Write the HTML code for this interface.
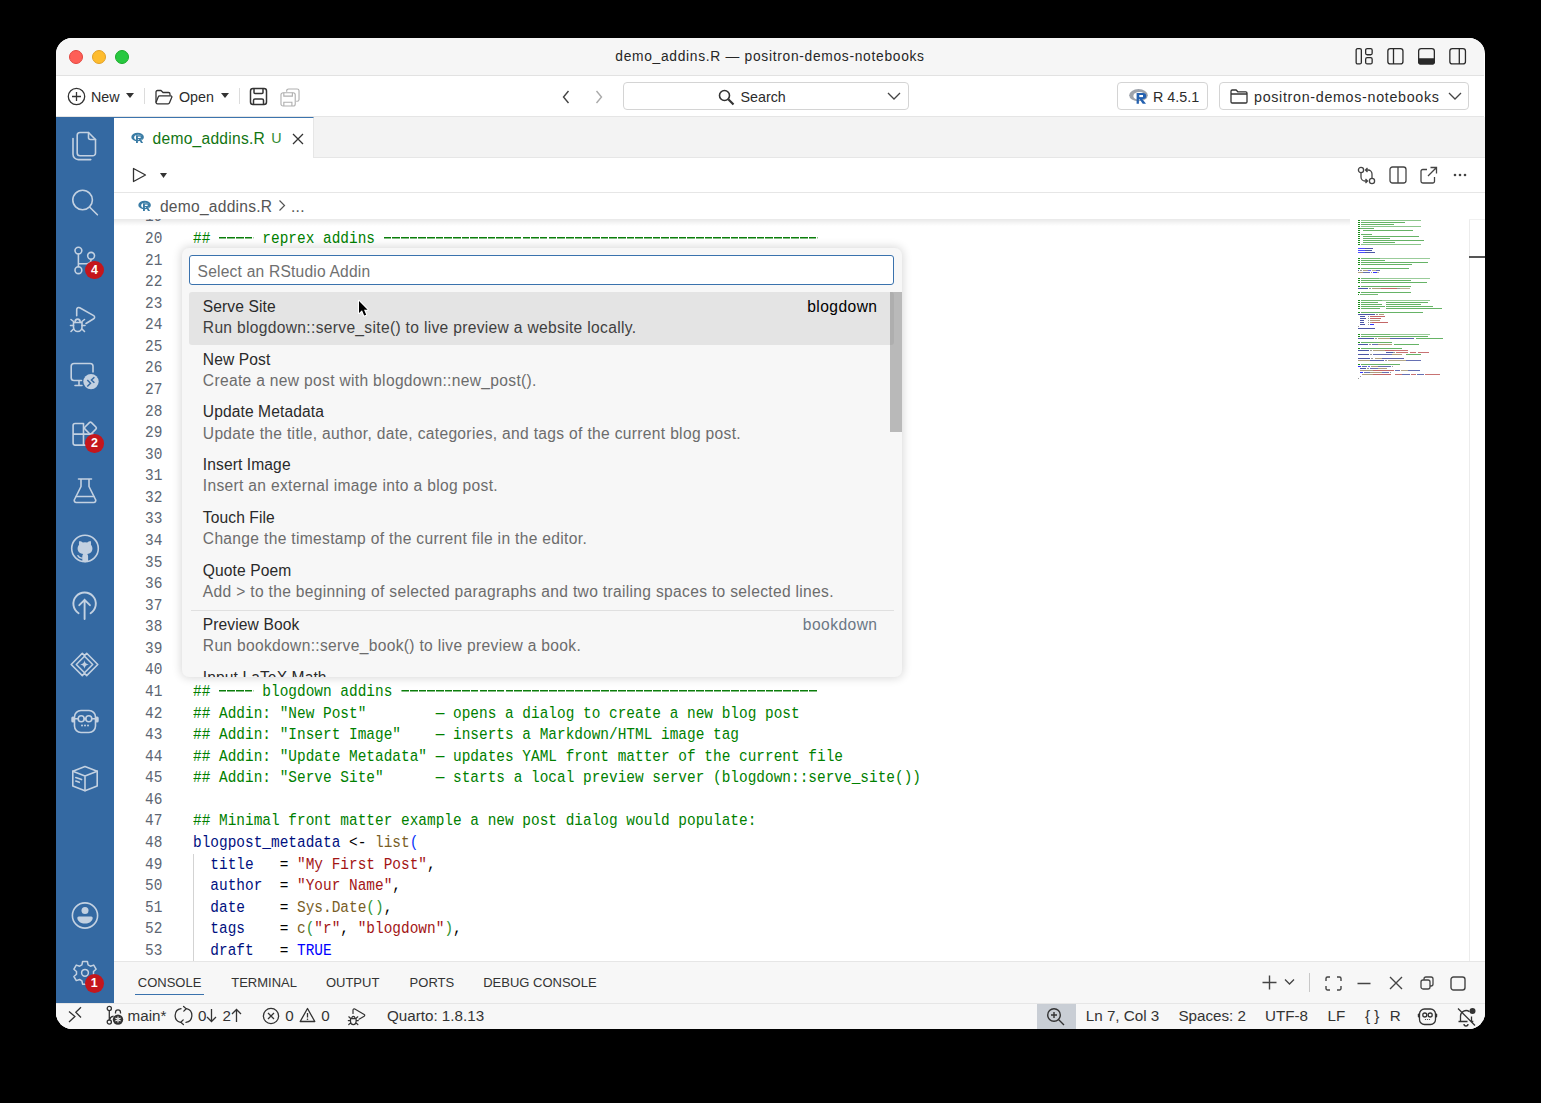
<!DOCTYPE html>
<html><head><meta charset="utf-8">
<style>
*{box-sizing:border-box;margin:0;padding:0}
html,body{width:1541px;height:1103px;background:#000;overflow:hidden}
body{font-family:"Liberation Sans",sans-serif;position:relative}
.abs{position:absolute}
#win{position:absolute;left:56px;top:38px;width:1429px;height:991px;border-radius:16px;overflow:hidden;background:#fff}
#title{left:0;top:0;width:1428px;height:38px;background:#f6f6f6;border-bottom:1px solid #e2e2e2}
.tl{position:absolute;top:12px;width:14px;height:14px;border-radius:50%}
#toolbar{left:0;top:38px;width:1428px;height:41px;background:#fff;border-bottom:1px solid #e5e5e5}
#act{left:0;top:79px;width:58px;height:886px;background:#33679f}
#tabs{left:58px;top:79px;width:1370px;height:41px;background:#f3f3f3;border-bottom:1px solid #e8e8e8}
#tab{left:0;top:0;width:200px;height:41px;background:#fff;border-top:1px solid #3a73ad;border-right:1px solid #e8e8e8}
#actions{left:58px;top:120px;width:1370px;height:35px;background:#fff;border-bottom:1px solid #e5e5e5}
#crumbs{left:58px;top:155px;width:1370px;height:26px;background:#fff}
#editor{left:58px;top:181px;width:1370px;height:742px;background:#fff}
#panel{left:58px;top:923px;width:1370px;height:42px;background:#f7f7f7;border-top:1px solid #e5e5e5}
#status{left:0;top:965px;width:1428px;height:26px;background:#f7f7f7;border-top:1px solid #e5e5e5}
.code{font-family:"Liberation Mono",monospace;font-size:14.4px;white-space:pre;color:#000}
.ln{position:absolute;left:0;width:104px;text-align:right;color:#6e7781;font-family:"Liberation Mono",monospace;font-size:14.4px}
.cl{position:absolute;left:137px}
.cm{color:#008000}
.id{color:#001080}
.fn{color:#795e26}
.st{color:#a31515}
.kw{color:#0000ff}
.b1{color:#0431fa}
.b2{color:#319331}
#qp{left:126px;top:210px;width:720px;height:429px;background:#f7f7f7;border-radius:8px;box-shadow:0 0 8px rgba(0,0,0,.18);overflow:hidden}
.ui{font-size:14px;color:#1f1f1f}
.tb{font-size:14.3px;color:#2b2b2b;white-space:nowrap}
.t13{white-space:nowrap}

.ln{color:#5d6672;font-family:"Liberation Mono",monospace;font-size:16.3px;text-align:right;white-space:pre}
.code{font-family:"Liberation Mono",monospace;font-size:16.3px;white-space:pre;color:#000}
.cm{color:#008000}.id{color:#001080}.fn{color:#795e26}.st{color:#a31515}.kw{color:#0000ff}.b1{color:#0431fa}.b2{color:#319331}.op{color:#000}
.dsh{color:transparent;display:inline-block;vertical-align:top;height:21.57px;background:repeating-linear-gradient(90deg,#0b7d0b 0 0.7px,#0b7d0b 0.7px 8.6px,transparent 8.6px 9.78px) 0 9.3px/100% 1.5px no-repeat}
.tabt{font-size:15.6px;letter-spacing:0.25px;white-space:nowrap}
.bct{font-size:15.6px;letter-spacing:0.25px;white-space:nowrap;color:#555}
.badge{background:#c4161c;color:#fff;border-radius:50%;text-align:center;font-weight:bold;font-size:12.5px}
.pt{font-size:13px;letter-spacing:0px;color:#333;white-space:nowrap}
.sb{font-size:15.2px;color:#333;white-space:nowrap}
.qpt{font-size:15.6px;letter-spacing:0.2px;white-space:nowrap}
.qpl{font-size:15.6px;letter-spacing:0.1px;white-space:nowrap;color:#2a2a2a}
.qpd{font-size:15.6px;letter-spacing:0.32px;white-space:nowrap;color:#6c6c6c}
</style></head><body>
<div id="win">
  <div id="title" class="abs">
    <div class="tl" style="left:13px;background:#fe5f57;border:0.5px solid #e2463f"></div>
    <div class="tl" style="left:36px;background:#febc2e;border:0.5px solid #e0a028"></div>
    <div class="tl" style="left:59px;background:#28c840;border:0.5px solid #1aab29"></div>
    <div class="abs t13" style="left:514px;top:10.5px;width:400px;text-align:center;font-size:13.8px;letter-spacing:0.7px;color:#262626">demo_addins.R — positron-demos-notebooks</div>
    <svg class="abs" style="left:1298px;top:9px" width="130" height="20" viewBox="0 0 130 20" fill="none" stroke="#2a2a2a" stroke-width="1.3">
      <rect x="2.15" y="1.55" width="5.2" height="15.4" rx="1.5"/><rect x="11.65" y="1.55" width="6.5" height="6.2" rx="1.5"/><rect x="11.65" y="10.7" width="6.5" height="6.25" rx="1.5"/>
      <rect x="33.85" y="1.55" width="15.1" height="15.4" rx="2.5"/><line x1="39.5" y1="1.55" x2="39.5" y2="16.95"/>
      <rect x="64.65" y="1.55" width="15.7" height="15.4" rx="2.5"/><path d="M64.65 11.9h15.7v2.55a2.5 2.5 0 0 1-2.5 2.5h-10.7a2.5 2.5 0 0 1-2.5-2.5z" fill="#2a2a2a"/>
      <rect x="95.85" y="1.55" width="15.6" height="15.4" rx="2.5"/><line x1="105.3" y1="1.55" x2="105.3" y2="16.95"/>
    </svg>
  </div>
  <div id="toolbar" class="abs">
        <svg class="abs" style="left:11px;top:11px" width="19" height="19" viewBox="0 0 19 19" fill="none" stroke="#333" stroke-width="1.3"><circle cx="9.5" cy="9.5" r="8.2"/><path d="M9.5 5v9M5 9.5h9"/></svg>
    <div class="abs tb" style="left:35px;top:12.7px">New</div>
    <svg class="abs" style="left:70px;top:17px" width="8" height="5"><path d="M0 0h8L4 5z" fill="#333"/></svg>
    <div class="abs" style="left:88px;top:12px;width:1px;height:16px;background:#dcdcdc"></div>
    <svg class="abs" style="left:99px;top:12.5px" width="18" height="16" viewBox="0 0 18 16" fill="none" stroke="#333" stroke-width="1.3" stroke-linejoin="round"><path d="M1 13.5V3a1.5 1.5 0 0 1 1.5-1.5h3.5l2 2h5.5A1.5 1.5 0 0 1 15 5v1.5"/><path d="M1 13.5 3.3 7.8A1.5 1.5 0 0 1 4.7 6.8h11.2a1 1 0 0 1 .9 1.4l-2.3 5.6a1.5 1.5 0 0 1-1.4 1H2.5A1.5 1.5 0 0 1 1 13.5z"/></svg>
    <div class="abs tb" style="left:123px;top:12.7px">Open</div>
    <svg class="abs" style="left:164.5px;top:17px" width="8" height="5"><path d="M0 0h8L4 5z" fill="#333"/></svg>
    <div class="abs" style="left:183px;top:12px;width:1px;height:16px;background:#dcdcdc"></div>
    <svg class="abs" style="left:192.5px;top:11px" width="19" height="19" viewBox="0 0 19 19" fill="none" stroke="#333" stroke-width="1.5"><rect x="1.5" y="1.5" width="16" height="16" rx="2.5"/><path d="M5 1.5v4a1 1 0 0 0 1 1h7a1 1 0 0 0 1-1v-4M4.5 17.5v-4a1.5 1.5 0 0 1 1.5-1.5h7a1.5 1.5 0 0 1 1.5 1.5v4"/></svg>
    <svg class="abs" style="left:223.5px;top:11.5px" width="20" height="19" viewBox="0 0 21 20" fill="none" stroke="#b0b0b0" stroke-width="1.2"><path d="M7 4V3a2 2 0 0 1 2-2h9a2 2 0 0 1 2 2v9a2 2 0 0 1-2 2h-1"/><rect x="1" y="5" width="15" height="14" rx="2.2"/><path d="M4 5v3.5h9V5M4 19v-4h8.5v4"/></svg>
    <svg class="abs" style="left:505px;top:13px" width="10" height="16" viewBox="0 0 10 16" fill="none" stroke="#444" stroke-width="1.4"><path d="M7.5 2 2.5 8l5 6"/></svg>
    <svg class="abs" style="left:538px;top:13px" width="10" height="16" viewBox="0 0 10 16" fill="none" stroke="#aaa" stroke-width="1.4"><path d="M2.5 2l5 6-5 6"/></svg>
    <div class="abs" style="left:567.3px;top:6.3px;width:285.5px;height:28px;border:1px solid #d4d4d4;border-radius:4px;background:#fff"></div>
    <svg class="abs" style="left:662px;top:13px" width="17" height="17" viewBox="0 0 17 17" fill="none" stroke="#333" stroke-width="1.6"><circle cx="6.5" cy="6.5" r="5"/><path d="M10.3 10.3 15.5 15.5" stroke-width="2.2"/></svg>
    <div class="abs tb" style="left:684.5px;top:12.7px">Search</div>
    <svg class="abs" style="left:831px;top:16px" width="14" height="9" viewBox="0 0 14 9" fill="none" stroke="#444" stroke-width="1.3"><path d="M1 1l6 6 6-6"/></svg>
    <div class="abs" style="left:1061.4px;top:6.3px;width:91px;height:28px;border:1px solid #d4d4d4;border-radius:4px;background:#fff"></div>
    <svg class="abs" style="left:1073px;top:12.8px" width="20" height="17" viewBox="0 0 20 17"><ellipse cx="9.5" cy="6.2" rx="9.3" ry="6.1" fill="#9ea3ab"/><ellipse cx="10.4" cy="6.9" rx="6.1" ry="3.9" fill="#fff"/><path d="M7.6 4h6.6a3 3 0 0 1 0 6h-.9l3.7 4.8h-3.3l-3.1-4.6h-.7v4.6H7.6z" fill="#2461b0"/><rect x="10.3" y="6" width="3.7" height="2.1" fill="#fff"/></svg>
    <div class="abs tb" style="left:1097px;top:12.7px">R 4.5.1</div>
    <div class="abs" style="left:1163.4px;top:6.3px;width:250px;height:28px;border:1px solid #d4d4d4;border-radius:4px;background:#fff"></div>
    <svg class="abs" style="left:1174px;top:13px" width="18" height="15" viewBox="0 0 18 15" fill="none" stroke="#333" stroke-width="1.3" stroke-linejoin="round"><path d="M1 2.2A1.2 1.2 0 0 1 2.2 1h4l1.6 1.8h8A1.2 1.2 0 0 1 17 4v8.8a1.2 1.2 0 0 1-1.2 1.2H2.2A1.2 1.2 0 0 1 1 12.8z"/><path d="M1 5h16"/></svg>
    <div class="abs tb" style="left:1198px;top:12.7px;letter-spacing:0.68px">positron-demos-notebooks</div>
    <svg class="abs" style="left:1392px;top:16px" width="14" height="9" viewBox="0 0 14 9" fill="none" stroke="#444" stroke-width="1.3"><path d="M1 1l6 6 6-6"/></svg>
  </div>
<div id="pg" class="abs" style="left:-56px;top:-38px;width:1541px;height:1103px">
<div class="abs" style="left:56px;top:117px;width:58px;height:886px;background:#3469a2"></div>
<div class="abs" style="left:114px;top:117px;width:1371px;height:41px;background:#f3f3f3;border-bottom:1px solid #e6e6e6"></div>
<div class="abs" style="left:114px;top:117px;width:200px;height:41px;background:#fff;border-top:1px solid #3c74ad;border-right:1px solid #e6e6e6"></div>
<div class="abs" style="left:114px;top:158px;width:1371px;height:35px;background:#fff;border-bottom:1px solid #e6e6e6"></div>
<div class="abs" style="left:114px;top:193px;width:1371px;height:26px;background:#fff"></div>
<div class="abs" style="left:114px;top:219px;width:1371px;height:742px;background:#fff"></div>
<div class="abs" style="left:114px;top:219px;width:1236px;height:7px;background:linear-gradient(rgba(0,0,0,.09),rgba(0,0,0,0))"></div>
<div class="abs" style="left:114px;top:961px;width:1371px;height:42px;background:#f7f7f7;border-top:1px solid #e6e6e6"></div>
<div class="abs" style="left:56px;top:1003px;width:1429px;height:26px;background:#f7f7f7;border-top:1px solid #e6e6e6"></div>
<svg class="abs" style="left:130.5px;top:132px" width="14" height="11" viewBox="0 0 14 11" ><ellipse cx="6.6" cy="5" rx="6.3" ry="4.3" fill="#3a7ca5"/><ellipse cx="7.3" cy="5.4" rx="4.1" ry="2.6" fill="#fff"/><path d="M5 3.3h5.3a1.9 1.9 0 0 1 0 3.8h-.6l2.4 3.9h-2.1l-2.1-3.7H6.9V11H5z" fill="#3a7ca5"/><rect x="6.9" y="4.6" width="2.7" height="1.4" fill="#fff"/></svg>
<div class="abs tabt" style="left:152.6px;top:130px;color:#127512">demo_addins.R</div>
<div class="abs tabt" style="left:271.3px;top:130.4px;color:#2f8a2f;font-size:14.3px">U</div>
<svg class="abs" style="left:291.5px;top:133px" width="12" height="12" viewBox="0 0 12 12" ><path d="M1 1l10 10M11 1 1 11" stroke="#333" stroke-width="1.3"/></svg>
<svg class="abs" style="left:132px;top:167px" width="15" height="16" viewBox="0 0 15 16" ><path d="M1.5 1.5v13L13.5 8z" fill="none" stroke="#333" stroke-width="1.3" stroke-linejoin="round"/></svg>
<svg class="abs" style="left:160px;top:172.5px" width="7" height="5" viewBox="0 0 7 5" ><path d="M0 0h7L3.5 5z" fill="#333"/></svg>
<svg class="abs" style="left:1357px;top:166px" width="19" height="19" viewBox="0 0 19 19" ><g fill="none" stroke="#444" stroke-width="1.3"><circle cx="4" cy="4" r="2.6"/><circle cx="15" cy="15" r="2.6"/><path d="M4 6.6V11a4 4 0 0 0 4 4h2.5M8.5 13l2 2-2 2M15 12.4V8a4 4 0 0 0-4-4H8.5M10.5 2l-2 2 2 2"/></g></svg>
<svg class="abs" style="left:1389px;top:166px" width="18" height="18" viewBox="0 0 18 18" ><g fill="none" stroke="#444" stroke-width="1.3"><rect x="1" y="1" width="16" height="16" rx="2.5"/><path d="M9 1v16"/></g></svg>
<svg class="abs" style="left:1420px;top:166px" width="18" height="18" viewBox="0 0 18 18" ><g fill="none" stroke="#444" stroke-width="1.3"><path d="M7 3.5H2.8A1.8 1.8 0 0 0 1 5.3v9.9A1.8 1.8 0 0 0 2.8 17h9.9a1.8 1.8 0 0 0 1.8-1.8V11M10.5 1.5H16.5V7.5M16.5 1.5 8 10"/></g></svg>
<svg class="abs" style="left:1453px;top:173px" width="14" height="4" viewBox="0 0 14 4" ><g fill="#444"><circle cx="2" cy="2" r="1.3"/><circle cx="7" cy="2" r="1.3"/><circle cx="12" cy="2" r="1.3"/></g></svg>
<svg class="abs" style="left:137.5px;top:200px" width="14" height="11" viewBox="0 0 14 11" ><ellipse cx="6.6" cy="5" rx="6.3" ry="4.3" fill="#3a7ca5"/><ellipse cx="7.3" cy="5.4" rx="4.1" ry="2.6" fill="#fff"/><path d="M5 3.3h5.3a1.9 1.9 0 0 1 0 3.8h-.6l2.4 3.9h-2.1l-2.1-3.7H6.9V11H5z" fill="#3a7ca5"/><rect x="6.9" y="4.6" width="2.7" height="1.4" fill="#fff"/></svg>
<div class="abs bct" style="left:159.9px;top:197.5px;">demo_addins.R</div>
<svg class="abs" style="left:278px;top:199px" width="8" height="13" viewBox="0 0 8 13" ><path d="M1.5 1.5 6.5 6.5l-5 5" fill="none" stroke="#555" stroke-width="1.2"/></svg>
<div class="abs bct" style="left:291px;top:197.5px;">...</div>
<svg class="abs" style="left:70px;top:129px" width="30" height="33" viewBox="0 0 30 33" ><g fill="none" stroke="#c3d1e1" stroke-width="1.6" stroke-linecap="round" stroke-linejoin="round"><path d="M10 3.5h8.5l7 7v13.5a2.8 2.8 0 0 1-2.8 2.8H10a2.8 2.8 0 0 1-2.8-2.8V6.3A2.8 2.8 0 0 1 10 3.5z"/><path d="M18.5 3.5v5a2 2 0 0 0 2 2h5"/><path d="M3 9.5v15.8a5.3 5.3 0 0 0 5.3 5.3h12.5"/></g></svg>
<svg class="abs" style="left:70px;top:188px" width="30" height="30" viewBox="0 0 30 30" ><g fill="none" stroke="#c3d1e1" stroke-width="1.6" stroke-linecap="round" stroke-linejoin="round"><circle cx="12.6" cy="12" r="9.8"/><path d="M19.8 19.2 27.4 26.8"/></g></svg>
<svg class="abs" style="left:70px;top:244px" width="30" height="34" viewBox="0 0 30 34" ><g fill="none" stroke="#c3d1e1" stroke-width="1.6" stroke-linecap="round" stroke-linejoin="round"><circle cx="8.4" cy="6.6" r="3.4"/><circle cx="8.4" cy="26.2" r="3.4"/><circle cx="21.1" cy="11.8" r="3.4"/><path d="M8.4 10v12.8M21.1 15.2c0 3.5-2 4.6-5 4.6H8.6"/></g></svg>
<div class="abs badge" style="left:85.2px;top:261.0px;width:18.4px;height:18.4px;line-height:18.4px">4</div>
<svg class="abs" style="left:68px;top:304px" width="32" height="32" viewBox="0 0 32 32" ><g fill="none" stroke="#c3d1e1" stroke-width="1.6" stroke-linecap="round" stroke-linejoin="round"><path d="M8.7 11.7V5.5a2 2 0 0 1 3-1.7l14 7.8a1.8 1.8 0 0 1 0 3.1L18 19.5"/><path d="M7 18.5a2.6 3.4 0 0 1 5.2 0"/><path d="M5.5 18.5h8.5v4.5a4.25 4.5 0 0 1-8.5 0z"/><path d="M3 15.5l2.5 2M16.5 15.5l-2.5 2M2.5 21.5h3M14 21.5h3M3 27.5l2.5-2.5M16.5 27.5 14 25"/></g></svg>
<svg class="abs" style="left:69px;top:362px" width="32" height="32" viewBox="0 0 32 32" ><g fill="none" stroke="#c3d1e1" stroke-width="1.6" stroke-linecap="round" stroke-linejoin="round"><path d="M24 10V4.3A2.8 2.8 0 0 0 21.2 1.5H5A2.8 2.8 0 0 0 2.2 4.3v11.4A2.8 2.8 0 0 0 5 18.5h7.5M10 19v3.5M6 23.5h7"/></g></svg>
<svg class="abs" style="left:69px;top:362px" width="32" height="32" viewBox="0 0 32 32" ><circle cx="22" cy="19.6" r="7.7" fill="#c3d1e1"/><path d="M18.3 18l3.2 3.3-3.2 3.2M25.4 15.2l-3 2.8 3 2.8" fill="none" stroke="#3469a2" stroke-width="1.5"/></svg>
<svg class="abs" style="left:70px;top:419px" width="30" height="30" viewBox="0 0 30 30" ><g fill="none" stroke="#c3d1e1" stroke-width="1.6" stroke-linecap="round" stroke-linejoin="round"><path d="M13.5 4.5H5.1a2 2 0 0 0-2 2v17.6a2 2 0 0 0 2 2H21a2 2 0 0 0 2-2v-9H3.1M13.5 4.5v21.6"/><path d="M19.4 3.6a1.5 1.5 0 0 1 2.1 0l4.4 4.4a1.5 1.5 0 0 1 0 2.1l-4.4 4.4a1.5 1.5 0 0 1-2.1 0L15 10.1a1.5 1.5 0 0 1 0-2.1z"/></g></svg>
<div class="abs badge" style="left:85.2px;top:434.3px;width:18.4px;height:18.4px;line-height:18.4px">2</div>
<svg class="abs" style="left:70px;top:476px" width="30" height="30" viewBox="0 0 30 30" ><g fill="none" stroke="#c3d1e1" stroke-width="1.6" stroke-linecap="round" stroke-linejoin="round"><path d="M8.5 3h13M11 3v7.5L4.5 23.5a2 2 0 0 0 1.8 3h17.4a2 2 0 0 0 1.8-3L19 10.5V3"/><path d="M6.2 20.5h17.6"/></g></svg>
<svg class="abs" style="left:69px;top:533px" width="32" height="32" viewBox="0 0 32 32" ><g fill="none" stroke="#c3d1e1" stroke-width="1.6" stroke-linecap="round" stroke-linejoin="round"><circle cx="16" cy="15.5" r="13.3"/></g></svg>
<svg class="abs" style="left:69px;top:533px" width="32" height="32" viewBox="0 0 32 32" ><path d="M8.6 15.6c0-1.6.6-2.9 1.5-3.9-.2-.8-.3-2.2.3-3.6 1.3.1 2.6.8 3.4 1.5a9.6 9.6 0 0 1 4.4 0c.8-.7 2.1-1.4 3.4-1.5.6 1.4.5 2.8.3 3.6.9 1 1.5 2.3 1.5 3.9 0 3.6-2.3 5-5.2 5.4.6.5.9 1.4.9 2.5v5.3a13 13 0 0 1-5.8 0v-5.3c0-1.1.3-2 .9-2.5-2.9-.4-5.6-1.8-5.6-5.4z" fill="#c3d1e1"/><path d="M13.2 25c-2 .3-3.3-.5-4.3-2.4" fill="none" stroke="#c3d1e1" stroke-width="1.3" stroke-linecap="round"/></svg>
<svg class="abs" style="left:70px;top:589px" width="30" height="33" viewBox="0 0 30 33" ><g fill="none" stroke="#c3d1e1" stroke-width="1.9" stroke-linecap="round" stroke-linejoin="round"><path d="M8.6 24.2A11.2 11.2 0 1 1 20.6 24.2"/><path d="M14.6 30V10.8M9.3 16.2l5.3-5.4 5.3 5.4"/></g></svg>
<svg class="abs" style="left:69px;top:651px" width="32" height="27" viewBox="0 0 32 27" ><g fill="none" stroke="#c3d1e1" stroke-width="1.6" stroke-linecap="round" stroke-linejoin="round"><path d="M15.5 4.6 13.3 2.3 2.2 13.5l11.1 11.1 2.2-2.3 2.2 2.3 11.1-11.1L17.7 2.3z"/><path d="M15.5 5.3 23.7 13.5 15.5 21.7 7.3 13.5z"/></g></svg>
<svg class="abs" style="left:69px;top:651px" width="32" height="27" viewBox="0 0 32 27" ><path d="M15.5 9.2c.3 2.4 1.8 4 4.3 4.3-2.5.3-4 1.9-4.3 4.3-.3-2.4-1.8-4-4.3-4.3 2.5-.3 4-1.9 4.3-4.3z" fill="#c3d1e1"/></svg>
<svg class="abs" style="left:69px;top:708px" width="32" height="28" viewBox="0 0 32 28" ><g fill="none" stroke="#c3d1e1" stroke-width="1.6" stroke-linecap="round" stroke-linejoin="round"><rect x="5.5" y="2.5" width="21" height="22" rx="6.5"/><circle cx="12.2" cy="10.8" r="3"/><circle cx="19.8" cy="10.8" r="3"/><path d="M15.2 10.8h1.6M5.5 10.8h3.7M23.1 10.8h3.4"/></g></svg>
<svg class="abs" style="left:69px;top:708px" width="32" height="28" viewBox="0 0 32 28" ><g fill="#c3d1e1"><rect x="2.3" y="8.5" width="3.5" height="6" rx="1.5"/><rect x="26.2" y="8.5" width="3.5" height="6" rx="1.5"/><circle cx="13" cy="17.5" r="1"/><circle cx="16" cy="17.5" r="1"/><circle cx="19" cy="17.5" r="1"/></g></svg>
<svg class="abs" style="left:70px;top:764px" width="30" height="30" viewBox="0 0 30 30" ><g fill="none" stroke="#c3d1e1" stroke-width="1.6" stroke-linecap="round" stroke-linejoin="round"><path d="M15 2.5 27.2 7.2v14.8L15 26.8 2.8 22V7.2z"/><path d="M2.8 7.2 15 12l12.2-4.8M15 12v14.8"/><path d="M5.8 13.5l5.8 2.1M5.8 17l3.5 1.3"/></g></svg>
<svg class="abs" style="left:69px;top:900px" width="32" height="32" viewBox="0 0 32 32" ><g fill="none" stroke="#c3d1e1" stroke-width="1.6" stroke-linecap="round" stroke-linejoin="round"><circle cx="16" cy="15.5" r="12.6"/></g></svg>
<svg class="abs" style="left:69px;top:900px" width="32" height="32" viewBox="0 0 32 32" ><g fill="#c3d1e1"><circle cx="16" cy="10.6" r="3.5"/><path d="M9.8 16.5h12.4a1.5 1.5 0 0 1 1.5 1.7c-.6 3.2-3.7 5.4-7.7 5.4s-7.1-2.2-7.7-5.4a1.5 1.5 0 0 1 1.5-1.7z"/></g></svg>
<svg class="abs" style="left:70px;top:959px" width="30" height="30" viewBox="0 0 30 30"><g fill="none" stroke="#c3d1e1" stroke-width="1.5" stroke-linejoin="round"><path d="M12.6 2.5h4.8l.7 3.4 2.3 1.3 3.3-1.1 2.4 4.1-2.6 2.3v2.7l2.6 2.3-2.4 4.1-3.3-1.1-2.3 1.3-.7 3.4h-4.8l-.7-3.4-2.3-1.3-3.3 1.1-2.4-4.1 2.6-2.3v-2.7L3.9 10.2l2.4-4.1 3.3 1.1 2.3-1.3z"/><circle cx="15" cy="13.8" r="3.4"/></g></svg>
<div class="abs badge" style="left:84.8px;top:974.0px;width:19.0px;height:19.0px;line-height:19.0px">1</div>
<div class="abs pt" style="left:137.8px;top:975px">CONSOLE</div>
<div class="abs pt" style="left:231.2px;top:975px">TERMINAL</div>
<div class="abs pt" style="left:325.9px;top:975px">OUTPUT</div>
<div class="abs pt" style="left:409.6px;top:975px">PORTS</div>
<div class="abs pt" style="left:483.2px;top:975px">DEBUG CONSOLE</div>
<div class="abs" style="left:134.8px;top:994.3px;width:69.2px;height:1.2px;background:#3a72ad"></div>
<svg class="abs" style="left:1261px;top:974px" width="17" height="17" viewBox="0 0 17 17" ><path d="M8.5 1.5v14M1.5 8.5h14" stroke="#444" stroke-width="1.4" fill="none"/></svg>
<svg class="abs" style="left:1284px;top:978px" width="11" height="8" viewBox="0 0 11 8" ><path d="M1 1.5l4.5 4.5L10 1.5" stroke="#444" stroke-width="1.3" fill="none"/></svg>
<div class="abs" style="left:1309.2px;top:973px;width:1.2px;height:19px;background:#c8c8c8"></div>
<svg class="abs" style="left:1324.5px;top:975.5px" width="17" height="15" viewBox="0 0 17 15" ><path d="M1 5V2.5A1.5 1.5 0 0 1 2.5 1H5M12 1h2.5A1.5 1.5 0 0 1 16 2.5V5M16 10v2.5a1.5 1.5 0 0 1-1.5 1.5H12M5 14H2.5A1.5 1.5 0 0 1 1 12.5V10" stroke="#444" stroke-width="1.4" fill="none"/></svg>
<svg class="abs" style="left:1357px;top:982px" width="14" height="3" viewBox="0 0 14 3" ><path d="M0.5 1.5h13" stroke="#444" stroke-width="1.4"/></svg>
<svg class="abs" style="left:1388.5px;top:976px" width="14" height="14" viewBox="0 0 14 14" ><path d="M1 1l12 12M13 1 1 13" stroke="#444" stroke-width="1.4" fill="none"/></svg>
<svg class="abs" style="left:1419.5px;top:976px" width="14" height="14" viewBox="0 0 14 14" ><g stroke="#444" stroke-width="1.3" fill="none"><rect x="1" y="4" width="9" height="9" rx="2"/><path d="M4 4V3a2 2 0 0 1 2-2h5a2 2 0 0 1 2 2v5a2 2 0 0 1-2 2h-1"/></g></svg>
<svg class="abs" style="left:1449.5px;top:975.5px" width="16" height="15" viewBox="0 0 16 15" ><rect x="1" y="1" width="14" height="13" rx="2.5" stroke="#444" stroke-width="1.4" fill="none"/></svg>
<svg class="abs" style="left:66px;top:1005px" width="18" height="20" viewBox="0 0 18 20" ><path d="M3 6.6l5.9 5-5.9 5.5M15 2.3 9.8 7.2l5.2 5.3" stroke="#333" stroke-width="1.3" fill="none"/></svg>
<svg class="abs" style="left:104px;top:1004px" width="22" height="22" viewBox="0 0 22 22" ><g stroke="#333" stroke-width="1.3" fill="none"><circle cx="5.3" cy="4.5" r="2.1"/><circle cx="5.3" cy="18.1" r="2.1"/><path d="M5.3 6.6v9.4M5.6 15.5c.5-2 2-3 4-3.3M11.5 9.5V8.3a2.5 2.5 0 0 1 5 0v1.2"/></g><circle cx="14" cy="15.6" r="5.2" fill="#333"/><path d="M14 12.6v6M11.4 14.1l5.2 3M16.6 14.1l-5.2 3" stroke="#f7f7f7" stroke-width="1.1"/></svg>
<div class="abs sb" style="left:127.6px;top:1006.5px;">main*</div>
<svg class="abs" style="left:174px;top:1005px" width="19" height="21" viewBox="0 0 19 21" ><g stroke="#333" stroke-width="1.3" fill="none" stroke-linecap="round"><path d="M7 3.6A7 7 0 0 0 6.5 17.3M12 17.4A7 7 0 0 0 12.5 3.7"/><path d="M9.6 1.5l2.6 2.2-2.4 2.4M9.4 19.5 6.8 17.3l2.4-2.4"/></g></svg>
<div class="abs sb" style="left:197.9px;top:1006.5px">0</div><div class="abs sb" style="left:222.5px;top:1006.5px">2</div>
<svg class="abs" style="left:206px;top:1008px" width="11" height="15" viewBox="0 0 11 15" ><path d="M5.5 1v12.5M1 9l4.5 4.5L10 9" stroke="#333" stroke-width="1.3" fill="none"/></svg>
<svg class="abs" style="left:230.5px;top:1008px" width="11" height="15" viewBox="0 0 11 15" ><path d="M5.5 14V1.5M1 6l4.5-4.5L10 6" stroke="#333" stroke-width="1.3" fill="none"/></svg>
<svg class="abs" style="left:261.5px;top:1006.5px" width="18" height="18" viewBox="0 0 18 18" ><g stroke="#333" stroke-width="1.3" fill="none"><circle cx="9" cy="9" r="7.6"/><path d="M6 6l6 6M12 6l-6 6"/></g></svg>
<div class="abs sb" style="left:285.3px;top:1006.5px;">0</div>
<svg class="abs" style="left:298.5px;top:1006.5px" width="17" height="16" viewBox="0 0 17 16" ><g stroke="#333" stroke-width="1.3" fill="none" stroke-linejoin="round"><path d="M8.5 1.5 15.8 14.5H1.2z"/><path d="M8.5 6v4.5"/></g><circle cx="8.5" cy="12.3" r=".8" fill="#333"/></svg>
<div class="abs sb" style="left:321.3px;top:1006.5px;">0</div>
<svg class="abs" style="left:347px;top:1006px" width="20" height="20" viewBox="0 0 20 20" ><g stroke="#333" stroke-width="1.2" fill="none" stroke-linejoin="round" stroke-linecap="round"><path d="M6 7.5V4a1.2 1.2 0 0 1 1.8-1l9.4 5.4a1.1 1.1 0 0 1 0 1.9L12 13.2"/><path d="M4.6 12.6a1.7 2.2 0 0 1 3.4 0M3.5 12.6h5.6v3a2.8 3 0 0 1-5.6 0zM1.8 10.8l1.7 1.5M10.8 10.8l-1.7 1.5M1.3 14.6h2.2M9.1 14.6h2.2M1.8 18.5l1.8-1.6M10.8 18.5 9 16.9"/></g></svg>
<div class="abs sb" style="left:387px;top:1006.5px;">Quarto: 1.8.13</div>
<div class="abs" style="left:1036.6px;top:1004px;width:39.1px;height:25px;background:#c9ced5"></div>
<svg class="abs" style="left:1046px;top:1007px" width="20" height="19" viewBox="0 0 20 19" ><g stroke="#333" stroke-width="1.4" fill="none"><circle cx="8" cy="8" r="6.3"/><path d="M12.5 12.5 18 18M8 5v6M5 8h6"/></g></svg>
<div class="abs sb" style="left:1085.8px;top:1006.5px;">Ln 7, Col 3</div>
<div class="abs sb" style="left:1178.4px;top:1006.5px;">Spaces: 2</div>
<div class="abs sb" style="left:1265px;top:1006.5px;">UTF-8</div>
<div class="abs sb" style="left:1327.6px;top:1006.5px;">LF</div>
<div class="abs sb" style="left:1365px;top:1006.5px;">{ }</div>
<div class="abs sb" style="left:1389.7px;top:1006.5px;">R</div>
<svg class="abs" style="left:1417px;top:1007px" width="21" height="19" viewBox="0 0 21 19" ><g stroke="#333" stroke-width="1.3" fill="none"><rect x="2.5" y="2" width="16" height="15.5" rx="5"/><circle cx="7.8" cy="8" r="2"/><circle cx="13.2" cy="8" r="2"/></g><g fill="#333"><rect x=".8" y="6.5" width="2.2" height="4" rx="1"/><rect x="18" y="6.5" width="2.2" height="4" rx="1"/><circle cx="8.5" cy="12.5" r=".6"/><circle cx="10.5" cy="12.5" r=".6"/><circle cx="12.5" cy="12.5" r=".6"/></g></svg>
<svg class="abs" style="left:1456px;top:1007px" width="21" height="20" viewBox="0 0 21 20" ><g stroke="#333" stroke-width="1.3" fill="none" stroke-linejoin="round"><path d="M4.5 14.5V9a5.5 5.5 0 0 1 9-4.2M15.5 9.5v5h1.8M2.5 14.5h9M8 17a2 2 0 0 0 4 0M2 1.5l17 17"/></g><circle cx="16.5" cy="4" r="3" fill="#333"/></svg>
<div class="abs" style="left:1468.5px;top:219px;width:1.0px;height:742px;background:#ececec"></div>
<div class="abs" style="left:1468.5px;top:219px;width:16.5px;height:1px;background:#f0f0f0"></div>
<div class="abs" style="left:1469px;top:255.5px;width:16px;height:2.5px;background:#555"></div>
<div class="abs" style="left:1358.1px;top:219.8px;width:2px;height:1.6px;background:#008000;opacity:0.9"></div>
<div class="abs" style="left:1361.1px;top:219.8px;width:60px;height:1.6px;background:#008000;opacity:0.45"></div>
<div class="abs" style="left:1358.1px;top:221.8px;width:2px;height:1.6px;background:#008000;opacity:0.9"></div>
<div class="abs" style="left:1361.1px;top:221.8px;width:44px;height:1.6px;background:#008000;opacity:0.6"></div>
<div class="abs" style="left:1358.1px;top:223.8px;width:2px;height:1.6px;background:#008000;opacity:0.9"></div>
<div class="abs" style="left:1361.1px;top:223.8px;width:33px;height:1.6px;background:#008000;opacity:0.6"></div>
<div class="abs" style="left:1358.1px;top:225.8px;width:2px;height:1.6px;background:#008000;opacity:0.9"></div>
<div class="abs" style="left:1361.1px;top:225.8px;width:60px;height:1.6px;background:#008000;opacity:0.45"></div>
<div class="abs" style="left:1358.1px;top:227.8px;width:2px;height:1.6px;background:#008000;opacity:0.9"></div>
<div class="abs" style="left:1360.1px;top:227.8px;width:14px;height:1.6px;background:#008000;opacity:0.6"></div>
<div class="abs" style="left:1358.1px;top:229.8px;width:2px;height:1.6px;background:#008000;opacity:0.9"></div>
<div class="abs" style="left:1363.1px;top:229.8px;width:50px;height:1.6px;background:#008000;opacity:0.6"></div>
<div class="abs" style="left:1358.1px;top:231.8px;width:2px;height:1.6px;background:#008000;opacity:0.9"></div>
<div class="abs" style="left:1358.1px;top:233.8px;width:2px;height:1.6px;background:#008000;opacity:0.9"></div>
<div class="abs" style="left:1361.1px;top:233.8px;width:11px;height:1.6px;background:#008000;opacity:0.6"></div>
<div class="abs" style="left:1358.1px;top:235.8px;width:2px;height:1.6px;background:#008000;opacity:0.9"></div>
<div class="abs" style="left:1363.1px;top:235.8px;width:56px;height:1.6px;background:#008000;opacity:0.6"></div>
<div class="abs" style="left:1358.1px;top:237.8px;width:2px;height:1.6px;background:#008000;opacity:0.9"></div>
<div class="abs" style="left:1363.1px;top:237.8px;width:27px;height:1.6px;background:#008000;opacity:0.6"></div>
<div class="abs" style="left:1358.1px;top:239.8px;width:2px;height:1.6px;background:#008000;opacity:0.9"></div>
<div class="abs" style="left:1363.1px;top:239.8px;width:61px;height:1.6px;background:#008000;opacity:0.6"></div>
<div class="abs" style="left:1358.1px;top:241.8px;width:2px;height:1.6px;background:#008000;opacity:0.9"></div>
<div class="abs" style="left:1363.1px;top:241.8px;width:32px;height:1.6px;background:#008000;opacity:0.6"></div>
<div class="abs" style="left:1358.1px;top:243.8px;width:2px;height:1.6px;background:#008000;opacity:0.9"></div>
<div class="abs" style="left:1361.1px;top:243.8px;width:60px;height:1.6px;background:#008000;opacity:0.45"></div>
<div class="abs" style="left:1358.1px;top:247.8px;width:7px;height:1.6px;background:#0000ff;opacity:0.7"></div>
<div class="abs" style="left:1365.1px;top:247.8px;width:8px;height:1.6px;background:#001080;opacity:0.7"></div>
<div class="abs" style="left:1358.1px;top:249.8px;width:7px;height:1.6px;background:#0000ff;opacity:0.7"></div>
<div class="abs" style="left:1365.1px;top:249.8px;width:7px;height:1.6px;background:#001080;opacity:0.7"></div>
<div class="abs" style="left:1358.1px;top:251.8px;width:7px;height:1.6px;background:#0000ff;opacity:0.7"></div>
<div class="abs" style="left:1365.1px;top:251.8px;width:10px;height:1.6px;background:#001080;opacity:0.7"></div>
<div class="abs" style="left:1358.1px;top:257.8px;width:2px;height:1.6px;background:#008000;opacity:0.9"></div>
<div class="abs" style="left:1361.1px;top:257.8px;width:19px;height:1.6px;background:#008000;opacity:0.55"></div>
<div class="abs" style="left:1380.1px;top:257.8px;width:50px;height:1.6px;background:#008000;opacity:0.4"></div>
<div class="abs" style="left:1358.1px;top:259.8px;width:2px;height:1.6px;background:#008000;opacity:0.9"></div>
<div class="abs" style="left:1361.1px;top:259.8px;width:24px;height:1.6px;background:#008000;opacity:0.6"></div>
<div class="abs" style="left:1358.1px;top:261.8px;width:2px;height:1.6px;background:#008000;opacity:0.9"></div>
<div class="abs" style="left:1361.1px;top:261.8px;width:67px;height:1.6px;background:#008000;opacity:0.6"></div>
<div class="abs" style="left:1358.1px;top:263.8px;width:2px;height:1.6px;background:#008000;opacity:0.9"></div>
<div class="abs" style="left:1361.1px;top:263.8px;width:51px;height:1.6px;background:#008000;opacity:0.6"></div>
<div class="abs" style="left:1358.1px;top:267.8px;width:2px;height:1.6px;background:#008000;opacity:0.9"></div>
<div class="abs" style="left:1361.1px;top:267.8px;width:48px;height:1.6px;background:#008000;opacity:0.6"></div>
<div class="abs" style="left:1358.1px;top:269.8px;width:1px;height:1.6px;background:#001080;opacity:0.7"></div>
<div class="abs" style="left:1360.1px;top:269.8px;width:2px;height:1.6px;background:#333333;opacity:0.5"></div>
<div class="abs" style="left:1363.1px;top:269.8px;width:5px;height:1.6px;background:#795e26;opacity:0.6"></div>
<div class="abs" style="left:1368.1px;top:269.8px;width:3px;height:1.6px;background:#0000ff;opacity:0.6"></div>
<div class="abs" style="left:1372.1px;top:269.8px;width:4px;height:1.6px;background:#795e26;opacity:0.5"></div>
<div class="abs" style="left:1376.1px;top:269.8px;width:4px;height:1.6px;background:#001080;opacity:0.6"></div>
<div class="abs" style="left:1358.1px;top:271.8px;width:5px;height:1.6px;background:#795e26;opacity:0.6"></div>
<div class="abs" style="left:1363.1px;top:271.8px;width:7px;height:1.6px;background:#001080;opacity:0.6"></div>
<div class="abs" style="left:1371.1px;top:271.8px;width:1px;height:1.6px;background:#333333;opacity:0.5"></div>
<div class="abs" style="left:1373.1px;top:271.8px;width:4px;height:1.6px;background:#0000ff;opacity:0.8"></div>
<div class="abs" style="left:1377.1px;top:271.8px;width:2px;height:1.6px;background:#795e26;opacity:0.5"></div>
<div class="abs" style="left:1358.1px;top:277.8px;width:2px;height:1.6px;background:#008000;opacity:0.9"></div>
<div class="abs" style="left:1361.1px;top:277.8px;width:18px;height:1.6px;background:#008000;opacity:0.55"></div>
<div class="abs" style="left:1379.1px;top:277.8px;width:51px;height:1.6px;background:#008000;opacity:0.4"></div>
<div class="abs" style="left:1358.1px;top:279.8px;width:2px;height:1.6px;background:#008000;opacity:0.9"></div>
<div class="abs" style="left:1361.1px;top:279.8px;width:50px;height:1.6px;background:#008000;opacity:0.6"></div>
<div class="abs" style="left:1358.1px;top:281.8px;width:2px;height:1.6px;background:#008000;opacity:0.9"></div>
<div class="abs" style="left:1361.1px;top:281.8px;width:66px;height:1.6px;background:#008000;opacity:0.6"></div>
<div class="abs" style="left:1358.1px;top:285.8px;width:2px;height:1.6px;background:#008000;opacity:0.9"></div>
<div class="abs" style="left:1361.1px;top:285.8px;width:50px;height:1.6px;background:#008000;opacity:0.6"></div>
<div class="abs" style="left:1358.1px;top:287.8px;width:10px;height:1.6px;background:#001080;opacity:0.7"></div>
<div class="abs" style="left:1369.1px;top:287.8px;width:2px;height:1.6px;background:#333333;opacity:0.5"></div>
<div class="abs" style="left:1372.1px;top:287.8px;width:9px;height:1.6px;background:#795e26;opacity:0.6"></div>
<div class="abs" style="left:1381.1px;top:287.8px;width:16px;height:1.6px;background:#a31515;opacity:0.65"></div>
<div class="abs" style="left:1397.1px;top:287.8px;width:3px;height:1.6px;background:#333333;opacity:0.5"></div>
<div class="abs" style="left:1400.1px;top:287.8px;width:10px;height:1.6px;background:#795e26;opacity:0.5"></div>
<div class="abs" style="left:1358.1px;top:291.8px;width:2px;height:1.6px;background:#008000;opacity:0.9"></div>
<div class="abs" style="left:1361.1px;top:291.8px;width:50px;height:1.6px;background:#008000;opacity:0.6"></div>
<div class="abs" style="left:1358.1px;top:293.8px;width:1px;height:1.6px;background:#008000;opacity:0.9"></div>
<div class="abs" style="left:1360.1px;top:293.8px;width:18px;height:1.6px;background:#008000;opacity:0.55"></div>
<div class="abs" style="left:1358.1px;top:299.8px;width:2px;height:1.6px;background:#008000;opacity:0.9"></div>
<div class="abs" style="left:1361.1px;top:299.8px;width:21px;height:1.6px;background:#008000;opacity:0.55"></div>
<div class="abs" style="left:1382.1px;top:299.8px;width:48px;height:1.6px;background:#008000;opacity:0.4"></div>
<div class="abs" style="left:1358.1px;top:301.8px;width:2px;height:1.6px;background:#008000;opacity:0.9"></div>
<div class="abs" style="left:1361.1px;top:301.8px;width:17px;height:1.6px;background:#008000;opacity:0.6"></div>
<div class="abs" style="left:1386.1px;top:301.8px;width:42px;height:1.6px;background:#008000;opacity:0.6"></div>
<div class="abs" style="left:1358.1px;top:303.8px;width:2px;height:1.6px;background:#008000;opacity:0.9"></div>
<div class="abs" style="left:1361.1px;top:303.8px;width:21px;height:1.6px;background:#008000;opacity:0.6"></div>
<div class="abs" style="left:1386.1px;top:303.8px;width:35px;height:1.6px;background:#008000;opacity:0.6"></div>
<div class="abs" style="left:1358.1px;top:305.8px;width:2px;height:1.6px;background:#008000;opacity:0.9"></div>
<div class="abs" style="left:1361.1px;top:305.8px;width:24px;height:1.6px;background:#008000;opacity:0.6"></div>
<div class="abs" style="left:1386.1px;top:305.8px;width:47px;height:1.6px;background:#008000;opacity:0.6"></div>
<div class="abs" style="left:1358.1px;top:307.8px;width:2px;height:1.6px;background:#008000;opacity:0.9"></div>
<div class="abs" style="left:1361.1px;top:307.8px;width:19px;height:1.6px;background:#008000;opacity:0.6"></div>
<div class="abs" style="left:1386.1px;top:307.8px;width:56px;height:1.6px;background:#008000;opacity:0.6"></div>
<div class="abs" style="left:1358.1px;top:311.8px;width:2px;height:1.6px;background:#008000;opacity:0.9"></div>
<div class="abs" style="left:1361.1px;top:311.8px;width:62px;height:1.6px;background:#008000;opacity:0.6"></div>
<div class="abs" style="left:1358.1px;top:313.8px;width:17px;height:1.6px;background:#001080;opacity:0.7"></div>
<div class="abs" style="left:1376.1px;top:313.8px;width:2px;height:1.6px;background:#333333;opacity:0.5"></div>
<div class="abs" style="left:1379.1px;top:313.8px;width:5px;height:1.6px;background:#795e26;opacity:0.6"></div>
<div class="abs" style="left:1360.1px;top:315.8px;width:5px;height:1.6px;background:#001080;opacity:0.7"></div>
<div class="abs" style="left:1368.1px;top:315.8px;width:1px;height:1.6px;background:#333333;opacity:0.5"></div>
<div class="abs" style="left:1370.1px;top:315.8px;width:15px;height:1.6px;background:#a31515;opacity:0.65"></div>
<div class="abs" style="left:1360.1px;top:317.8px;width:6px;height:1.6px;background:#001080;opacity:0.7"></div>
<div class="abs" style="left:1368.1px;top:317.8px;width:1px;height:1.6px;background:#333333;opacity:0.5"></div>
<div class="abs" style="left:1370.1px;top:317.8px;width:11px;height:1.6px;background:#a31515;opacity:0.65"></div>
<div class="abs" style="left:1360.1px;top:319.8px;width:4px;height:1.6px;background:#001080;opacity:0.7"></div>
<div class="abs" style="left:1368.1px;top:319.8px;width:1px;height:1.6px;background:#333333;opacity:0.5"></div>
<div class="abs" style="left:1370.1px;top:319.8px;width:10px;height:1.6px;background:#795e26;opacity:0.6"></div>
<div class="abs" style="left:1360.1px;top:321.8px;width:4px;height:1.6px;background:#001080;opacity:0.7"></div>
<div class="abs" style="left:1368.1px;top:321.8px;width:1px;height:1.6px;background:#333333;opacity:0.5"></div>
<div class="abs" style="left:1370.1px;top:321.8px;width:2px;height:1.6px;background:#795e26;opacity:0.6"></div>
<div class="abs" style="left:1372.1px;top:321.8px;width:16px;height:1.6px;background:#a31515;opacity:0.65"></div>
<div class="abs" style="left:1360.1px;top:323.8px;width:5px;height:1.6px;background:#001080;opacity:0.7"></div>
<div class="abs" style="left:1368.1px;top:323.8px;width:1px;height:1.6px;background:#333333;opacity:0.5"></div>
<div class="abs" style="left:1370.1px;top:323.8px;width:4px;height:1.6px;background:#0000ff;opacity:0.8"></div>
<div class="abs" style="left:1358.1px;top:325.8px;width:1px;height:1.6px;background:#333333;opacity:0.5"></div>
<div class="abs" style="left:1358.1px;top:327.8px;width:17px;height:1.6px;background:#001080;opacity:0.7"></div>
<div class="abs" style="left:1358.1px;top:333.8px;width:2px;height:1.6px;background:#008000;opacity:0.9"></div>
<div class="abs" style="left:1361.1px;top:333.8px;width:29px;height:1.6px;background:#008000;opacity:0.55"></div>
<div class="abs" style="left:1390.1px;top:333.8px;width:40px;height:1.6px;background:#008000;opacity:0.4"></div>
<div class="abs" style="left:1358.1px;top:335.8px;width:2px;height:1.6px;background:#008000;opacity:0.9"></div>
<div class="abs" style="left:1361.1px;top:335.8px;width:67px;height:1.6px;background:#008000;opacity:0.6"></div>
<div class="abs" style="left:1358.1px;top:337.8px;width:16px;height:1.6px;background:#001080;opacity:0.7"></div>
<div class="abs" style="left:1375.1px;top:337.8px;width:2px;height:1.6px;background:#333333;opacity:0.5"></div>
<div class="abs" style="left:1378.1px;top:337.8px;width:12px;height:1.6px;background:#795e26;opacity:0.6"></div>
<div class="abs" style="left:1390.1px;top:337.8px;width:24px;height:1.6px;background:#001080;opacity:0.65"></div>
<div class="abs" style="left:1416.1px;top:337.8px;width:27px;height:1.6px;background:#008000;opacity:0.6"></div>
<div class="abs" style="left:1358.1px;top:341.8px;width:2px;height:1.6px;background:#008000;opacity:0.9"></div>
<div class="abs" style="left:1361.1px;top:341.8px;width:31px;height:1.6px;background:#008000;opacity:0.6"></div>
<div class="abs" style="left:1358.1px;top:343.8px;width:10px;height:1.6px;background:#001080;opacity:0.7"></div>
<div class="abs" style="left:1369.1px;top:343.8px;width:2px;height:1.6px;background:#333333;opacity:0.5"></div>
<div class="abs" style="left:1372.1px;top:343.8px;width:6px;height:1.6px;background:#001080;opacity:0.6"></div>
<div class="abs" style="left:1378.1px;top:343.8px;width:14px;height:1.6px;background:#795e26;opacity:0.6"></div>
<div class="abs" style="left:1394.1px;top:343.8px;width:25px;height:1.6px;background:#008000;opacity:0.6"></div>
<div class="abs" style="left:1358.1px;top:347.8px;width:2px;height:1.6px;background:#008000;opacity:0.9"></div>
<div class="abs" style="left:1361.1px;top:347.8px;width:41px;height:1.6px;background:#008000;opacity:0.6"></div>
<div class="abs" style="left:1358.1px;top:349.8px;width:11px;height:1.6px;background:#001080;opacity:0.7"></div>
<div class="abs" style="left:1370.1px;top:349.8px;width:2px;height:1.6px;background:#333333;opacity:0.5"></div>
<div class="abs" style="left:1373.1px;top:349.8px;width:12px;height:1.6px;background:#795e26;opacity:0.6"></div>
<div class="abs" style="left:1385.1px;top:349.8px;width:9px;height:1.6px;background:#a31515;opacity:0.65"></div>
<div class="abs" style="left:1394.1px;top:349.8px;width:14px;height:1.6px;background:#a31515;opacity:0.6"></div>
<div class="abs" style="left:1386.1px;top:351.8px;width:7px;height:1.6px;background:#001080;opacity:0.7"></div>
<div class="abs" style="left:1393.1px;top:351.8px;width:2px;height:1.6px;background:#333333;opacity:0.5"></div>
<div class="abs" style="left:1396.1px;top:351.8px;width:12px;height:1.6px;background:#a31515;opacity:0.6"></div>
<div class="abs" style="left:1410.1px;top:351.8px;width:6px;height:1.6px;background:#a31515;opacity:0.6"></div>
<div class="abs" style="left:1418.1px;top:351.8px;width:11px;height:1.6px;background:#a31515;opacity:0.6"></div>
<div class="abs" style="left:1358.1px;top:353.8px;width:11px;height:1.6px;background:#001080;opacity:0.7"></div>
<div class="abs" style="left:1370.1px;top:353.8px;width:2px;height:1.6px;background:#333333;opacity:0.5"></div>
<div class="abs" style="left:1373.1px;top:353.8px;width:19px;height:1.6px;background:#001080;opacity:0.6"></div>
<div class="abs" style="left:1392.1px;top:353.8px;width:10px;height:1.6px;background:#795e26;opacity:0.6"></div>
<div class="abs" style="left:1406.1px;top:353.8px;width:15px;height:1.6px;background:#008000;opacity:0.6"></div>
<div class="abs" style="left:1358.1px;top:357.8px;width:12px;height:1.6px;background:#001080;opacity:0.7"></div>
<div class="abs" style="left:1371.1px;top:357.8px;width:2px;height:1.6px;background:#333333;opacity:0.5"></div>
<div class="abs" style="left:1375.1px;top:357.8px;width:7px;height:1.6px;background:#795e26;opacity:0.6"></div>
<div class="abs" style="left:1382.1px;top:357.8px;width:22px;height:1.6px;background:#001080;opacity:0.65"></div>
<div class="abs" style="left:1358.1px;top:359.8px;width:12px;height:1.6px;background:#795e26;opacity:0.6"></div>
<div class="abs" style="left:1370.1px;top:359.8px;width:14px;height:1.6px;background:#001080;opacity:0.65"></div>
<div class="abs" style="left:1385.1px;top:359.8px;width:2px;height:1.6px;background:#333333;opacity:0.5"></div>
<div class="abs" style="left:1388.1px;top:359.8px;width:18px;height:1.6px;background:#795e26;opacity:0.55"></div>
<div class="abs" style="left:1406.1px;top:359.8px;width:15px;height:1.6px;background:#001080;opacity:0.6"></div>
<div class="abs" style="left:1358.1px;top:363.8px;width:2px;height:1.6px;background:#008000;opacity:0.9"></div>
<div class="abs" style="left:1361.1px;top:363.8px;width:39px;height:1.6px;background:#008000;opacity:0.6"></div>
<div class="abs" style="left:1358.1px;top:365.8px;width:3px;height:1.6px;background:#0000ff;opacity:0.8"></div>
<div class="abs" style="left:1362.1px;top:365.8px;width:5px;height:1.6px;background:#001080;opacity:0.6"></div>
<div class="abs" style="left:1368.1px;top:365.8px;width:2px;height:1.6px;background:#0000ff;opacity:0.6"></div>
<div class="abs" style="left:1371.1px;top:365.8px;width:7px;height:1.6px;background:#795e26;opacity:0.6"></div>
<div class="abs" style="left:1378.1px;top:365.8px;width:13px;height:1.6px;background:#001080;opacity:0.6"></div>
<div class="abs" style="left:1392.1px;top:365.8px;width:1px;height:1.6px;background:#333333;opacity:0.5"></div>
<div class="abs" style="left:1360.1px;top:367.8px;width:6px;height:1.6px;background:#001080;opacity:0.7"></div>
<div class="abs" style="left:1367.1px;top:367.8px;width:2px;height:1.6px;background:#333333;opacity:0.5"></div>
<div class="abs" style="left:1370.1px;top:367.8px;width:8px;height:1.6px;background:#001080;opacity:0.6"></div>
<div class="abs" style="left:1378.1px;top:367.8px;width:9px;height:1.6px;background:#795e26;opacity:0.6"></div>
<div class="abs" style="left:1360.1px;top:369.8px;width:13px;height:1.6px;background:#795e26;opacity:0.6"></div>
<div class="abs" style="left:1373.1px;top:369.8px;width:21px;height:1.6px;background:#a31515;opacity:0.65"></div>
<div class="abs" style="left:1395.1px;top:369.8px;width:5px;height:1.6px;background:#001080;opacity:0.6"></div>
<div class="abs" style="left:1401.1px;top:369.8px;width:7px;height:1.6px;background:#795e26;opacity:0.55"></div>
<div class="abs" style="left:1408.1px;top:369.8px;width:12px;height:1.6px;background:#001080;opacity:0.6"></div>
<div class="abs" style="left:1360.1px;top:371.8px;width:3px;height:1.6px;background:#0000ff;opacity:0.8"></div>
<div class="abs" style="left:1364.1px;top:371.8px;width:6px;height:1.6px;background:#001080;opacity:0.6"></div>
<div class="abs" style="left:1370.1px;top:371.8px;width:12px;height:1.6px;background:#795e26;opacity:0.6"></div>
<div class="abs" style="left:1382.1px;top:371.8px;width:7px;height:1.6px;background:#001080;opacity:0.6"></div>
<div class="abs" style="left:1390.1px;top:371.8px;width:1px;height:1.6px;background:#333333;opacity:0.5"></div>
<div class="abs" style="left:1362.1px;top:373.8px;width:11px;height:1.6px;background:#795e26;opacity:0.6"></div>
<div class="abs" style="left:1373.1px;top:373.8px;width:18px;height:1.6px;background:#a31515;opacity:0.65"></div>
<div class="abs" style="left:1395.1px;top:373.8px;width:7px;height:1.6px;background:#a31515;opacity:0.6"></div>
<div class="abs" style="left:1402.1px;top:373.8px;width:8px;height:1.6px;background:#001080;opacity:0.6"></div>
<div class="abs" style="left:1411.1px;top:373.8px;width:5px;height:1.6px;background:#a31515;opacity:0.6"></div>
<div class="abs" style="left:1417.1px;top:373.8px;width:7px;height:1.6px;background:#001080;opacity:0.6"></div>
<div class="abs" style="left:1425.1px;top:373.8px;width:15px;height:1.6px;background:#a31515;opacity:0.6"></div>
<div class="abs" style="left:1360.1px;top:375.8px;width:1px;height:1.6px;background:#333333;opacity:0.5"></div>
<div class="abs" style="left:1358.1px;top:377.8px;width:1px;height:1.6px;background:#333333;opacity:0.5"></div>
<div class="abs" style="left:114px;top:219px;width:1240px;height:742px;overflow:hidden">
<div class="abs ln" style="left:30.95000000000001px;top:-12.569999999999993px;line-height:21.57px;width:19.56px;transform:scaleX(0.8870);transform-origin:0 0">19</div>
<div class="abs ln" style="left:30.95000000000001px;top:9.0px;line-height:21.57px;width:19.56px;transform:scaleX(0.8870);transform-origin:0 0">20</div>
<div class="abs code" style="left:78.86000000000001px;top:9.0px;line-height:21.57px;transform:scaleX(0.8870);transform-origin:0 0"><span class="cm">## </span><span class="dsh">----</span><span class="cm"> reprex addins </span><span class="dsh">--------------------------------------------------</span></div>
<div class="abs ln" style="left:30.95000000000001px;top:30.569999999999993px;line-height:21.57px;width:19.56px;transform:scaleX(0.8870);transform-origin:0 0">21</div>
<div class="abs ln" style="left:30.95000000000001px;top:52.139999999999986px;line-height:21.57px;width:19.56px;transform:scaleX(0.8870);transform-origin:0 0">22</div>
<div class="abs ln" style="left:30.95000000000001px;top:73.71000000000004px;line-height:21.57px;width:19.56px;transform:scaleX(0.8870);transform-origin:0 0">23</div>
<div class="abs ln" style="left:30.95000000000001px;top:95.27999999999997px;line-height:21.57px;width:19.56px;transform:scaleX(0.8870);transform-origin:0 0">24</div>
<div class="abs ln" style="left:30.95000000000001px;top:116.85000000000002px;line-height:21.57px;width:19.56px;transform:scaleX(0.8870);transform-origin:0 0">25</div>
<div class="abs ln" style="left:30.95000000000001px;top:138.42000000000002px;line-height:21.57px;width:19.56px;transform:scaleX(0.8870);transform-origin:0 0">26</div>
<div class="abs ln" style="left:30.95000000000001px;top:159.99px;line-height:21.57px;width:19.56px;transform:scaleX(0.8870);transform-origin:0 0">27</div>
<div class="abs ln" style="left:30.95000000000001px;top:181.56px;line-height:21.57px;width:19.56px;transform:scaleX(0.8870);transform-origin:0 0">28</div>
<div class="abs ln" style="left:30.95000000000001px;top:203.13px;line-height:21.57px;width:19.56px;transform:scaleX(0.8870);transform-origin:0 0">29</div>
<div class="abs ln" style="left:30.95000000000001px;top:224.7px;line-height:21.57px;width:19.56px;transform:scaleX(0.8870);transform-origin:0 0">30</div>
<div class="abs ln" style="left:30.95000000000001px;top:246.26999999999998px;line-height:21.57px;width:19.56px;transform:scaleX(0.8870);transform-origin:0 0">31</div>
<div class="abs ln" style="left:30.95000000000001px;top:267.84000000000003px;line-height:21.57px;width:19.56px;transform:scaleX(0.8870);transform-origin:0 0">32</div>
<div class="abs ln" style="left:30.95000000000001px;top:289.41px;line-height:21.57px;width:19.56px;transform:scaleX(0.8870);transform-origin:0 0">33</div>
<div class="abs ln" style="left:30.95000000000001px;top:310.98px;line-height:21.57px;width:19.56px;transform:scaleX(0.8870);transform-origin:0 0">34</div>
<div class="abs ln" style="left:30.95000000000001px;top:332.54999999999995px;line-height:21.57px;width:19.56px;transform:scaleX(0.8870);transform-origin:0 0">35</div>
<div class="abs ln" style="left:30.95000000000001px;top:354.12px;line-height:21.57px;width:19.56px;transform:scaleX(0.8870);transform-origin:0 0">36</div>
<div class="abs ln" style="left:30.95000000000001px;top:375.69000000000005px;line-height:21.57px;width:19.56px;transform:scaleX(0.8870);transform-origin:0 0">37</div>
<div class="abs ln" style="left:30.95000000000001px;top:397.26px;line-height:21.57px;width:19.56px;transform:scaleX(0.8870);transform-origin:0 0">38</div>
<div class="abs ln" style="left:30.95000000000001px;top:418.8299999999999px;line-height:21.57px;width:19.56px;transform:scaleX(0.8870);transform-origin:0 0">39</div>
<div class="abs ln" style="left:30.95000000000001px;top:440.4px;line-height:21.57px;width:19.56px;transform:scaleX(0.8870);transform-origin:0 0">40</div>
<div class="abs ln" style="left:30.95000000000001px;top:461.97px;line-height:21.57px;width:19.56px;transform:scaleX(0.8870);transform-origin:0 0">41</div>
<div class="abs code" style="left:78.86000000000001px;top:461.97px;line-height:21.57px;transform:scaleX(0.8870);transform-origin:0 0"><span class="cm">## </span><span class="dsh">----</span><span class="cm"> blogdown addins </span><span class="dsh">------------------------------------------------</span></div>
<div class="abs ln" style="left:30.95000000000001px;top:483.53999999999996px;line-height:21.57px;width:19.56px;transform:scaleX(0.8870);transform-origin:0 0">42</div>
<div class="abs code" style="left:78.86000000000001px;top:483.53999999999996px;line-height:21.57px;transform:scaleX(0.8870);transform-origin:0 0"><span class="cm">## Addin: &quot;New Post&quot;        — opens a dialog to create a new blog post</span></div>
<div class="abs ln" style="left:30.95000000000001px;top:505.11px;line-height:21.57px;width:19.56px;transform:scaleX(0.8870);transform-origin:0 0">43</div>
<div class="abs code" style="left:78.86000000000001px;top:505.11px;line-height:21.57px;transform:scaleX(0.8870);transform-origin:0 0"><span class="cm">## Addin: &quot;Insert Image&quot;    — inserts a Markdown/HTML image tag</span></div>
<div class="abs ln" style="left:30.95000000000001px;top:526.6800000000001px;line-height:21.57px;width:19.56px;transform:scaleX(0.8870);transform-origin:0 0">44</div>
<div class="abs code" style="left:78.86000000000001px;top:526.6800000000001px;line-height:21.57px;transform:scaleX(0.8870);transform-origin:0 0"><span class="cm">## Addin: &quot;Update Metadata&quot; — updates YAML front matter of the current file</span></div>
<div class="abs ln" style="left:30.95000000000001px;top:548.25px;line-height:21.57px;width:19.56px;transform:scaleX(0.8870);transform-origin:0 0">45</div>
<div class="abs code" style="left:78.86000000000001px;top:548.25px;line-height:21.57px;transform:scaleX(0.8870);transform-origin:0 0"><span class="cm">## Addin: &quot;Serve Site&quot;      — starts a local preview server (blogdown::serve_site())</span></div>
<div class="abs ln" style="left:30.95000000000001px;top:569.82px;line-height:21.57px;width:19.56px;transform:scaleX(0.8870);transform-origin:0 0">46</div>
<div class="abs ln" style="left:30.95000000000001px;top:591.39px;line-height:21.57px;width:19.56px;transform:scaleX(0.8870);transform-origin:0 0">47</div>
<div class="abs code" style="left:78.86000000000001px;top:591.39px;line-height:21.57px;transform:scaleX(0.8870);transform-origin:0 0"><span class="cm">## Minimal front matter example a new post dialog would populate:</span></div>
<div class="abs ln" style="left:30.95000000000001px;top:612.96px;line-height:21.57px;width:19.56px;transform:scaleX(0.8870);transform-origin:0 0">48</div>
<div class="abs code" style="left:78.86000000000001px;top:612.96px;line-height:21.57px;transform:scaleX(0.8870);transform-origin:0 0"><span class="id">blogpost_metadata</span><span class="op"> &lt;- </span><span class="fn">list</span><span class="b1">(</span></div>
<div class="abs ln" style="left:30.95000000000001px;top:634.53px;line-height:21.57px;width:19.56px;transform:scaleX(0.8870);transform-origin:0 0">49</div>
<div class="abs code" style="left:78.86000000000001px;top:634.53px;line-height:21.57px;transform:scaleX(0.8870);transform-origin:0 0"><span class="op">  </span><span class="id">title</span><span class="op">   = </span><span class="st">&quot;My First Post&quot;</span><span class="op">,</span></div>
<div class="abs ln" style="left:30.95000000000001px;top:656.1px;line-height:21.57px;width:19.56px;transform:scaleX(0.8870);transform-origin:0 0">50</div>
<div class="abs code" style="left:78.86000000000001px;top:656.1px;line-height:21.57px;transform:scaleX(0.8870);transform-origin:0 0"><span class="op">  </span><span class="id">author</span><span class="op">  = </span><span class="st">&quot;Your Name&quot;</span><span class="op">,</span></div>
<div class="abs ln" style="left:30.95000000000001px;top:677.67px;line-height:21.57px;width:19.56px;transform:scaleX(0.8870);transform-origin:0 0">51</div>
<div class="abs code" style="left:78.86000000000001px;top:677.67px;line-height:21.57px;transform:scaleX(0.8870);transform-origin:0 0"><span class="op">  </span><span class="id">date</span><span class="op">    = </span><span class="fn">Sys.Date</span><span class="b2">()</span><span class="op">,</span></div>
<div class="abs ln" style="left:30.95000000000001px;top:699.24px;line-height:21.57px;width:19.56px;transform:scaleX(0.8870);transform-origin:0 0">52</div>
<div class="abs code" style="left:78.86000000000001px;top:699.24px;line-height:21.57px;transform:scaleX(0.8870);transform-origin:0 0"><span class="op">  </span><span class="id">tags</span><span class="op">    = </span><span class="fn">c</span><span class="b2">(</span><span class="st">&quot;r&quot;</span><span class="op">, </span><span class="st">&quot;blogdown&quot;</span><span class="b2">)</span><span class="op">,</span></div>
<div class="abs ln" style="left:30.95000000000001px;top:720.8100000000001px;line-height:21.57px;width:19.56px;transform:scaleX(0.8870);transform-origin:0 0">53</div>
<div class="abs code" style="left:78.86000000000001px;top:720.8100000000001px;line-height:21.57px;transform:scaleX(0.8870);transform-origin:0 0"><span class="op">  </span><span class="id">draft</span><span class="op">   = </span><span class="kw">TRUE</span></div>
<div class="abs" style="left:79px;top:634.53px;width:1px;height:129.42000000000002px;background:#d3d3d3"></div>
</div>
<div class="abs" style="left:182px;top:248px;width:720px;height:429px;background:#f7f7f7;border-radius:7px;box-shadow:0 0 10px 1px rgba(0,0,0,.16);overflow:hidden">
<div class="abs" style="left:7.300000000000011px;top:7.199999999999989px;width:705.2px;height:30.19999999999999px;background:#fff;border:1px solid #3a72ad;border-radius:3px"></div>
<div class="abs qpt" style="left:15.599999999999994px;top:14.5px;color:#707070">Select an RStudio Addin</div>
<div class="abs" style="left:7.300000000000011px;top:44px;width:704.7px;height:52.5px;background:#e4e4e4;border-radius:3px"></div>
<div class="abs qpl" style="left:20.80000000000001px;top:49.80000000000001px;">Serve Site</div>
<div class="abs qpd" style="left:20.80000000000001px;top:71.0px;color:#3f3f3f">Run blogdown::serve_site() to live preview a website locally.</div>
<div class="abs qpl" style="right:24.5px;top:49.80000000000001px;letter-spacing:0.45px;color:#000">blogdown</div>
<div class="abs qpl" style="left:20.80000000000001px;top:102.60000000000002px;">New Post</div>
<div class="abs qpd" style="left:20.80000000000001px;top:123.80000000000001px;">Create a new post with blogdown::new_post().</div>
<div class="abs qpl" style="left:20.80000000000001px;top:155.40000000000003px;">Update Metadata</div>
<div class="abs qpd" style="left:20.80000000000001px;top:176.60000000000002px;">Update the title, author, date, categories, and tags of the current blog post.</div>
<div class="abs qpl" style="left:20.80000000000001px;top:208.2px;">Insert Image</div>
<div class="abs qpd" style="left:20.80000000000001px;top:229.39999999999998px;">Insert an external image into a blog post.</div>
<div class="abs qpl" style="left:20.80000000000001px;top:261.0px;">Touch File</div>
<div class="abs qpd" style="left:20.80000000000001px;top:282.20000000000005px;">Change the timestamp of the current file in the editor.</div>
<div class="abs qpl" style="left:20.80000000000001px;top:313.79999999999995px;">Quote Poem</div>
<div class="abs qpd" style="left:20.80000000000001px;top:335.0px;">Add &gt; to the beginning of selected paragraphs and two trailing spaces to selected lines.</div>
<div class="abs" style="left:8.800000000000011px;top:361.6px;width:703.2px;height:1.0px;background:#e0e0e0"></div>
<div class="abs qpl" style="left:20.80000000000001px;top:367.79999999999995px;">Preview Book</div>
<div class="abs qpd" style="left:20.80000000000001px;top:389.0px;">Run bookdown::serve_book() to live preview a book.</div>
<div class="abs qpl" style="right:24.5px;top:367.79999999999995px;letter-spacing:0.45px;color:#6b7785">bookdown</div>
<div class="abs qpl" style="left:20.80000000000001px;top:420.5999999999999px;">Input LaTeX Math</div>
<div class="abs" style="left:708px;top:44px;width:12px;height:139.5px;background:rgba(100,100,100,.42)"></div>
</div>
<svg class="abs" style="left:357px;top:298.7px" width="16" height="21" viewBox="0 0 16 21" ><path d="M2 2v12l3-2.7 2.2 5.3 2-.8-2.2-5.1h3.6z" fill="#000" stroke="#fff" stroke-width="2.2" stroke-linejoin="round" paint-order="stroke"/></svg>
</div>
</div>
</body></html>
